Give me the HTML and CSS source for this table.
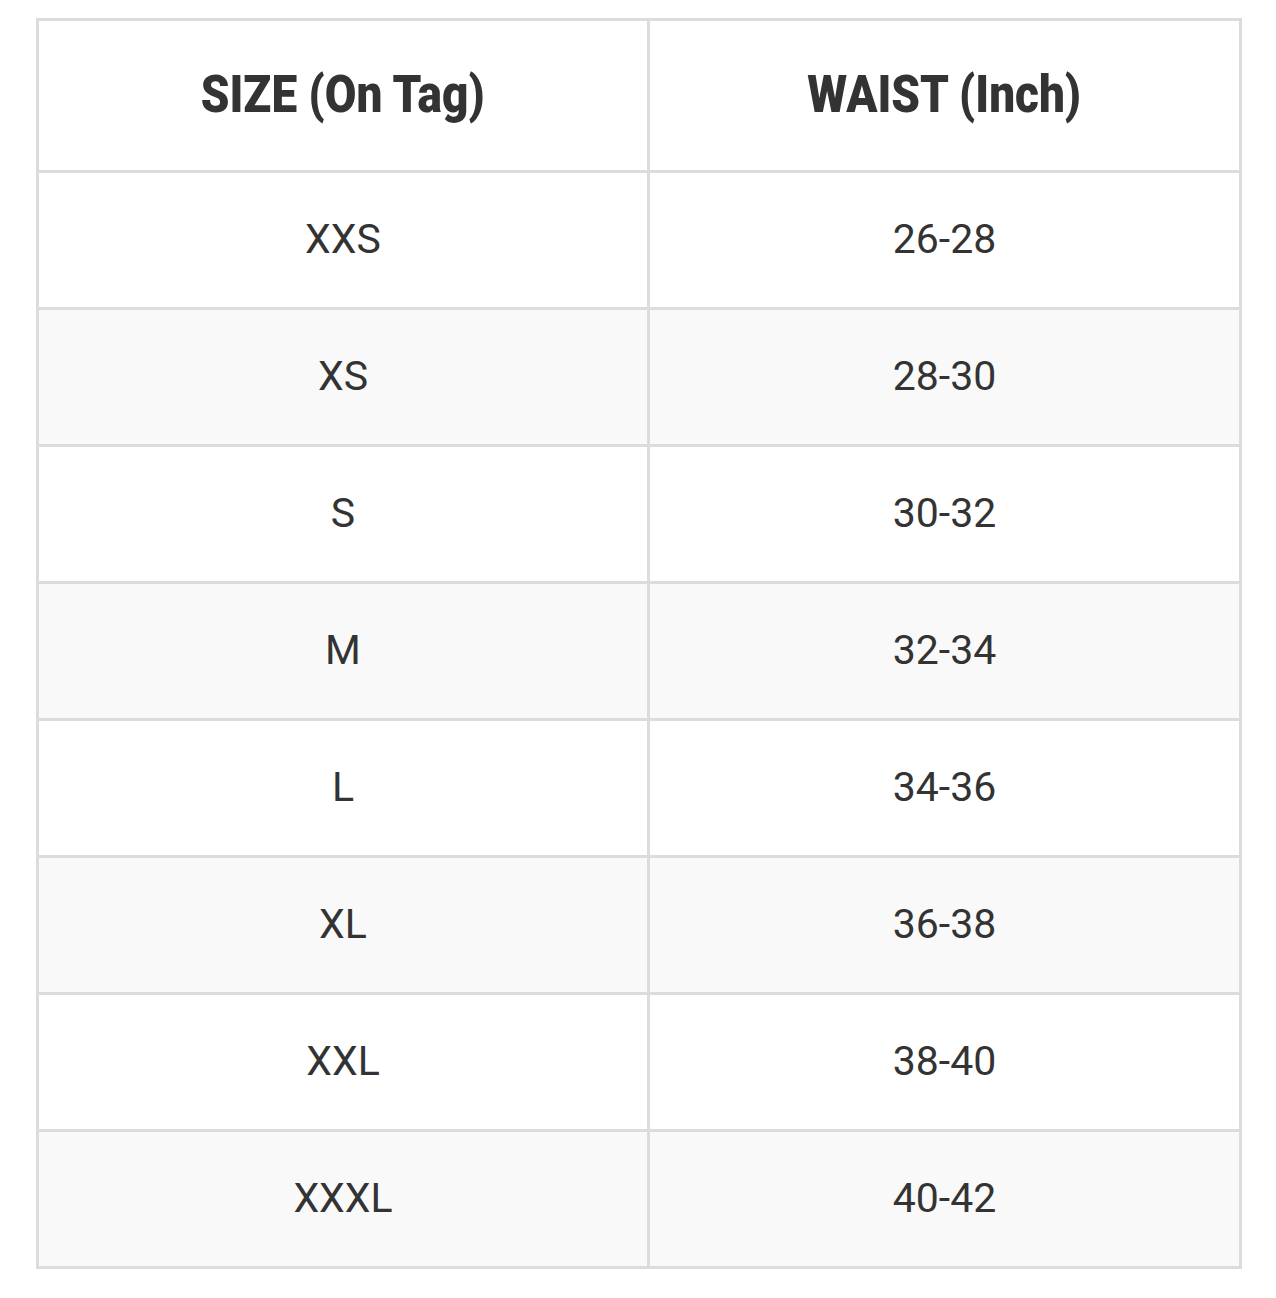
FILE: index.html
```html
<!DOCTYPE html>
<html>
<head>
<meta charset="utf-8">
<link rel="stylesheet" href="styles.css">
</head>
<body>
<table class="size-table">
  <thead>
    <tr><th class="col-size"><span class="cond">SIZE (On Tag)</span></th><th><span class="cond">WAIST (Inch)</span></th></tr>
  </thead>
  <tbody>
    <tr><td>XXS</td><td>26-28</td></tr>
    <tr><td>XS</td><td>28-30</td></tr>
    <tr><td>S</td><td>30-32</td></tr>
    <tr><td>M</td><td>32-34</td></tr>
    <tr><td>L</td><td>34-36</td></tr>
    <tr><td>XL</td><td>36-38</td></tr>
    <tr><td>XXL</td><td>38-40</td></tr>
    <tr><td>XXXL</td><td>40-42</td></tr>
  </tbody>
</table>
</body>
</html>
```
FILE: styles.css
```css
html, body {
  margin: 0;
  padding: 0;
  background: #fff;
}
body {
  padding: 18px 0 0 36px;
  font-family: Roboto, "Liberation Sans", sans-serif;
  color: #333;
}
.size-table {
  border-collapse: collapse;
  width: 1206px;
  border: 3px solid #dcdcdc;
}
.size-table th,
.size-table td {
  border: 3px solid #dcdcdc;
  text-align: center;
  padding: 0;
}
.size-table th {
  height: 147px;
  font-size: 51px;
  font-weight: 900;
  padding-bottom: 2px;
}
.col-size {
  width: 608px;
}
.cond {
  display: inline-block;
  transform: scaleX(0.9);
}
.size-table td {
  height: 132px;
  font-size: 41px;
  font-weight: 400;
  padding-bottom: 2px;
}
.size-table tbody tr:nth-child(even) td {
  background: #f9f9f9;
}
```
